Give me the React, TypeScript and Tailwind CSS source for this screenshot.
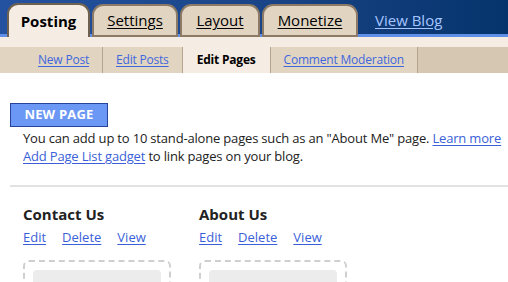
import React from "react";

const font = { fontFamily: '"Open Sans", "DejaVu Sans", sans-serif' };

function Tab({ label, w, active }: { label: string; w: string; active?: boolean }) {
  if (active) {
    return (
      <div
        className={`${w} h-[34px] rounded-t-[11px] border-2 border-b-0 border-[#6f6150] bg-[#f5ede3] flex items-center justify-center text-[15px] font-bold text-black relative z-10`}
      >
        {label}
      </div>
    );
  }
  return (
    <div
      className={`${w} h-[33px] rounded-t-[11px] border-2 border-[#8c7a66] bg-[#e1d5c2] flex items-center justify-center text-[15px] text-black underline underline-offset-2`}
    >
      {label}
    </div>
  );
}

function PageCard({ title }: { title: string }) {
  return (
    <div className="w-[176px] flex flex-col">
      <div className="text-[15px] font-bold text-[#222] leading-[20px]">{title}</div>
      <div className="flex gap-[16px] mt-[4px] text-[13px] text-[#3a5fd8] leading-[18px]">
        <span className="underline underline-offset-2">Edit</span>
        <span className="underline underline-offset-2">Delete</span>
        <span className="underline underline-offset-2">View</span>
      </div>
      <div className="mt-[14px] w-[148px] h-[40px] rounded-[6px] border-2 border-dashed border-[#cfcfcf] p-[8px]">
        <div className="h-full rounded-[4px] bg-[#ececec]" />
      </div>
    </div>
  );
}

export default function App() {
  return (
    <div className="w-[508px] h-[282px] overflow-hidden bg-white" style={font}>
      {/* top bar */}
      <div className="h-[37px] bg-gradient-to-r from-[#2452a0] via-[#1a4588] to-[#05346c] relative flex items-end pl-[7px] gap-[2px]">
        <div className="absolute left-0 right-0 bottom-0 h-[3px] bg-[#5f8fe6]" />
        <Tab label="Posting" w="w-[83px]" active />
        <div className="relative flex gap-[2px]">
          <Tab label="Settings" w="w-[86px]" />
          <Tab label="Layout" w="w-[80px]" />
          <Tab label="Monetize" w="w-[96px]" />
        </div>
        <div className="relative self-center ml-[15px] mt-[4px] text-[15px] text-[#a6c4ff] underline underline-offset-2">
          View Blog
        </div>
      </div>
      {/* cream band */}
      <div className="h-[10px] bg-[#f5ede3]" />
      {/* subnav */}
      <div className="h-[26px] flex bg-[#e1d5c2] text-[12px] tracking-[-0.2px] pl-[25px]">
        <div className="px-[13px] flex items-center border-r border-[#b5a48e] text-[#3f67dd] underline underline-offset-2">
          New Post
        </div>
        <div className="px-[13px] flex items-center border-r border-[#b5a48e] text-[#3f67dd] underline underline-offset-2">
          Edit Posts
        </div>
        <div className="px-[14px] flex items-center border-r border-[#b5a48e] bg-[#f5ede3] font-bold text-black">
          Edit Pages
        </div>
        <div className="px-[13px] flex items-center border-r border-[#b5a48e] text-[#3f67dd] underline underline-offset-2">
          Comment Moderation
        </div>
        <div className="flex-1 bg-[#d6c7b2]" />
      </div>
      {/* content */}
      <div className="pt-[30px]">
        <div className="pl-[10px]">
          <div className="w-[98px] h-[24px] bg-[#6b97f5] border border-[#27449a] flex items-center justify-center text-white font-bold text-[13px] tracking-[0.2px]">
            NEW PAGE
          </div>
        </div>
        <div className="pl-[23px] text-[13px] leading-[18px] tracking-[-0.18px] text-[#222] mt-[2px] whitespace-nowrap">
          <div>
            You can add up to 10 stand-alone pages such as an "About Me" page.{" "}
            <span className="text-[#3a5fd8] underline underline-offset-2">Learn more</span>
          </div>
          <div>
            <span className="text-[#3a5fd8] underline underline-offset-2">Add Page List gadget</span> to link pages on your blog.
          </div>
        </div>
        <div className="ml-[10px] mt-[20px] h-[2px] bg-[#e2e2e2]" />
        <div className="pl-[23px] pt-[17px] flex">
          <PageCard title="Contact Us" />
          <PageCard title="About Us" />
        </div>
      </div>
    </div>
  );
}
